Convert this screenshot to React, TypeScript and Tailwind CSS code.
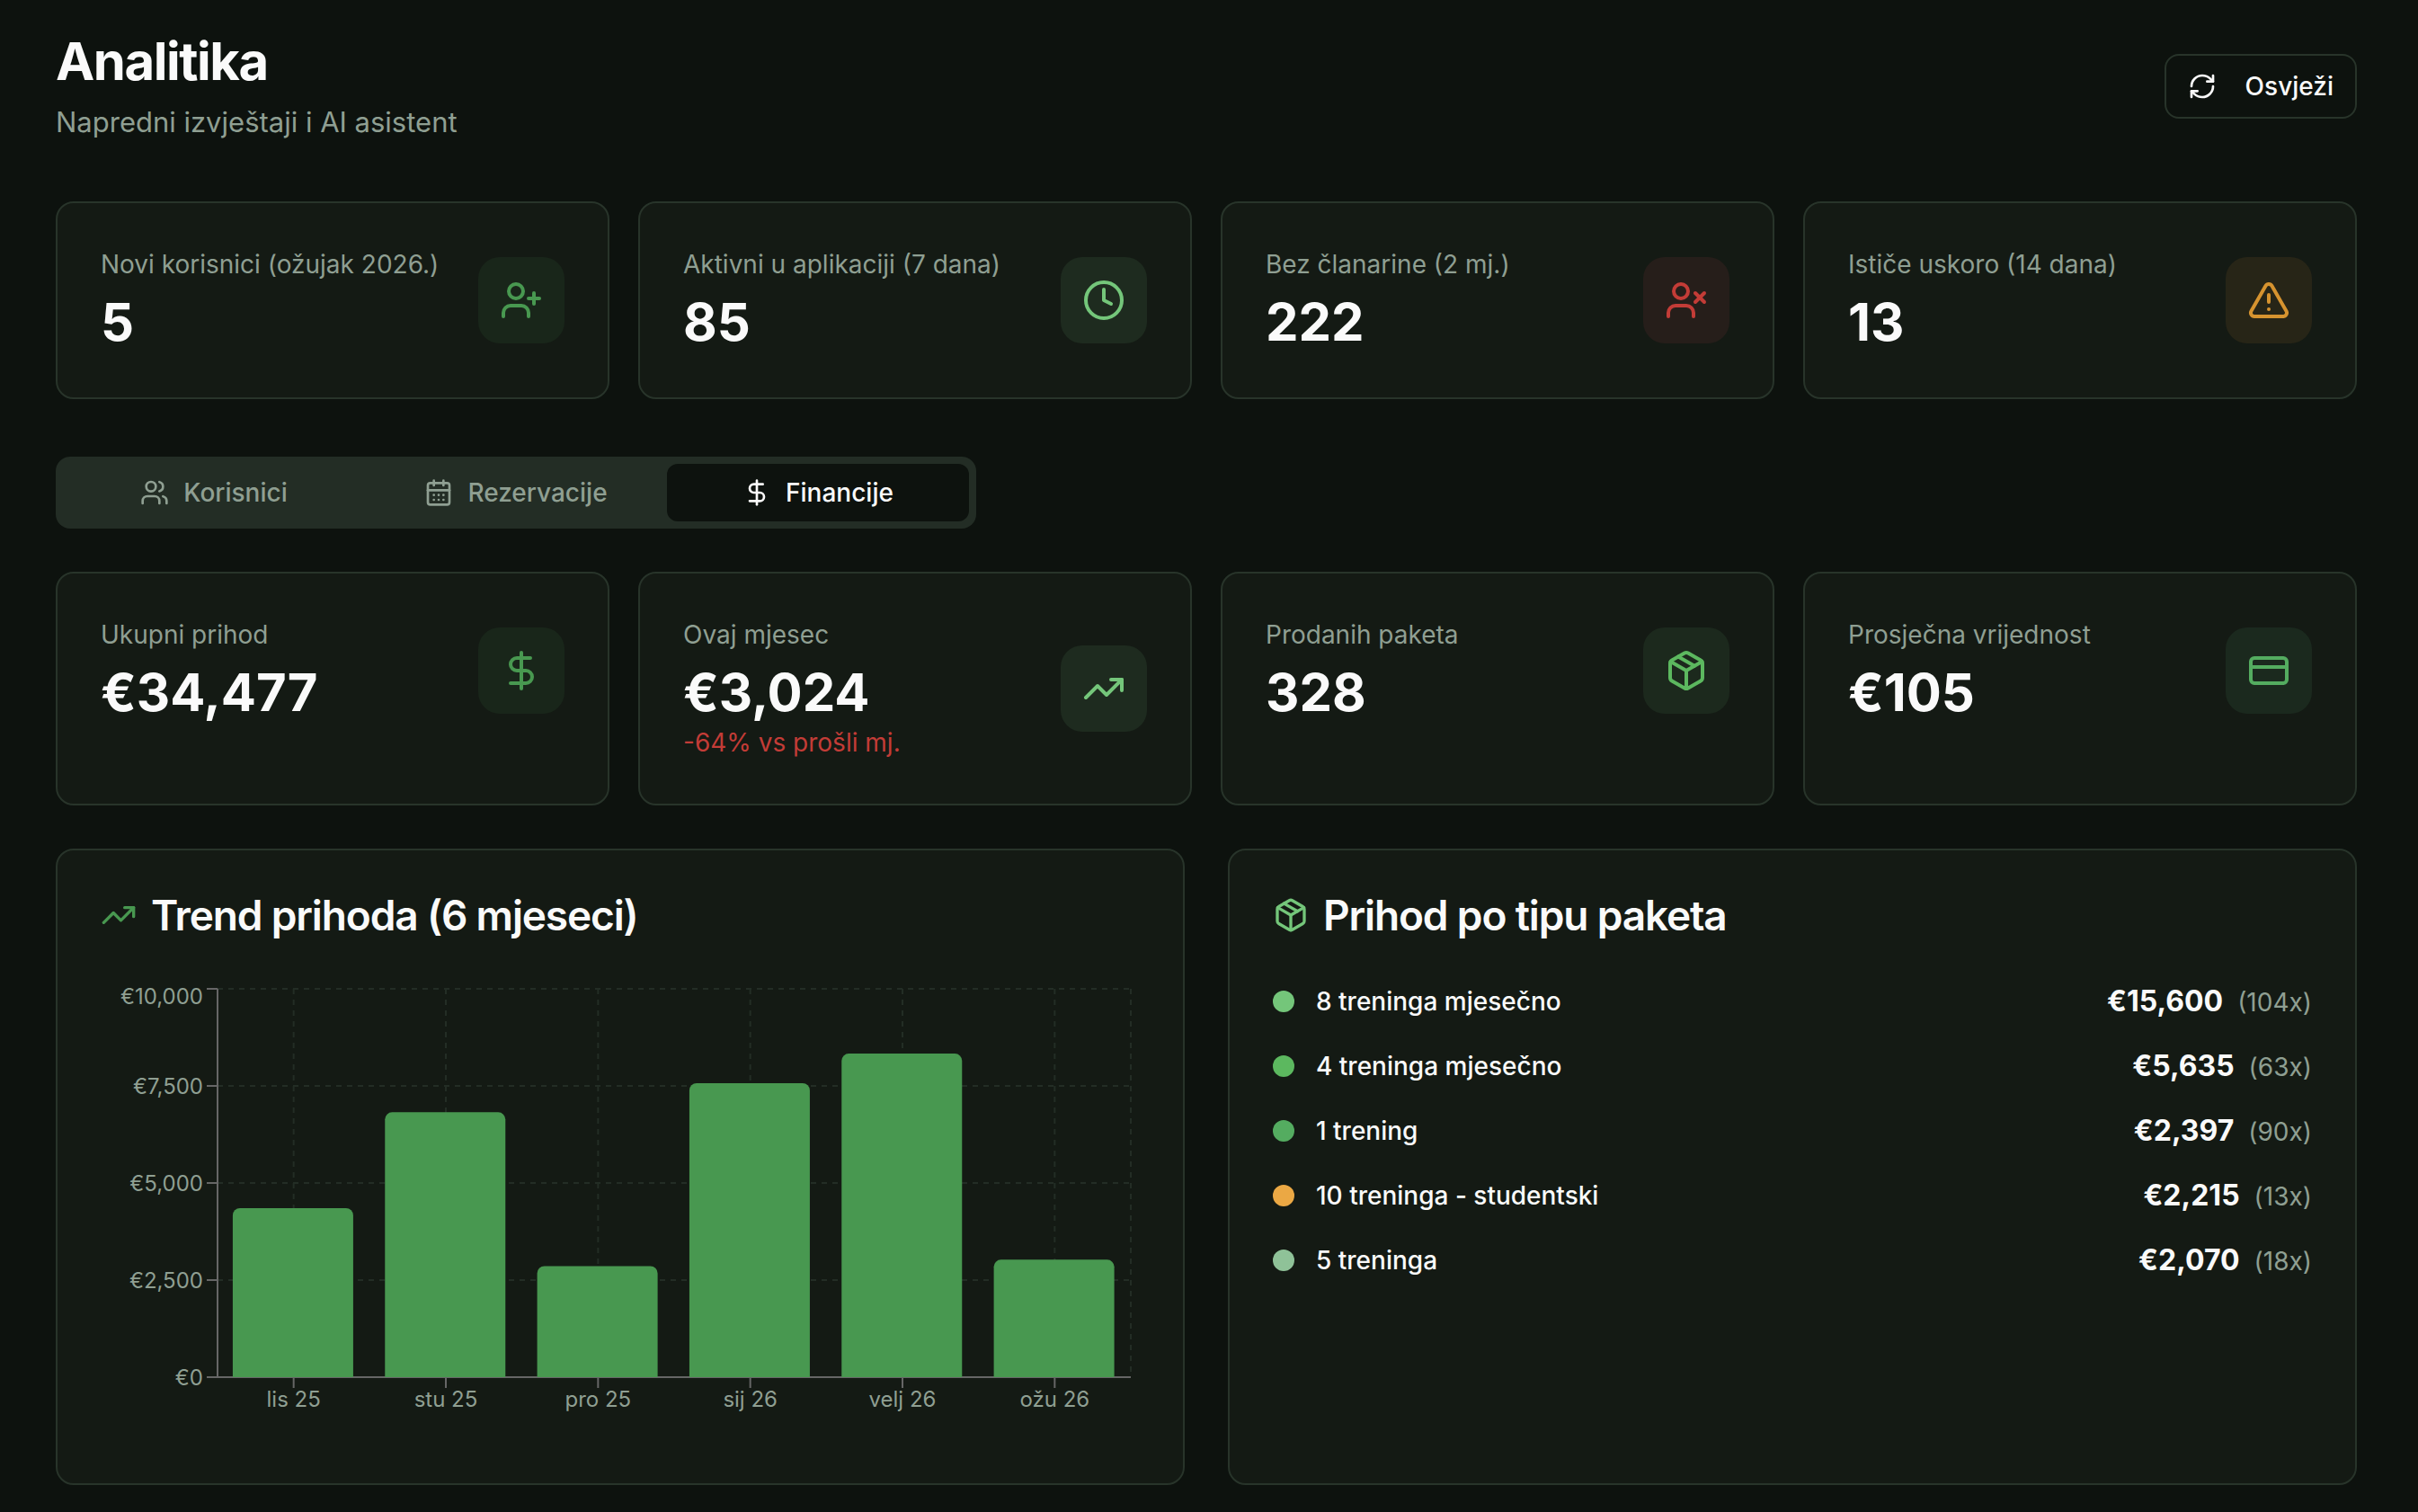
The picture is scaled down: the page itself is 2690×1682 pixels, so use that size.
import { useState } from 'react';
import {
  CalendarDays,
  Clock,
  CreditCard,
  DollarSign,
  Package,
  RefreshCw,
  TrendingUp,
  TriangleAlert,
  UserPlus,
  Users,
  UserX,
  type LucideIcon,
} from 'lucide-react';

type Stat = {
  label: string;
  value: string;
  note?: string;
  icon: LucideIcon;
  tone: string;
};

const userStats: Stat[] = [
  { label: 'Novi korisnici (ožujak 2026.)', value: '5', icon: UserPlus, tone: 'bg-[#19261a] text-[#489850]' },
  { label: 'Aktivni u aplikaciji (7 dana)', value: '85', icon: Clock, tone: 'bg-[#1e2b1f] text-[#74c67a]' },
  { label: 'Bez članarine (2 mj.)', value: '222', icon: UserX, tone: 'bg-[#261e1a] text-[#c33c37]' },
  { label: 'Ističe uskoro (14 dana)', value: '13', icon: TriangleAlert, tone: 'bg-[#272517] text-[#d6932f]' },
];

const financeStats: Stat[] = [
  { label: 'Ukupni prihod', value: '€34,477', icon: DollarSign, tone: 'bg-[#19261a] text-[#489850]' },
  { label: 'Ovaj mjesec', value: '€3,024', note: '-64% vs prošli mj.', icon: TrendingUp, tone: 'bg-[#1e2b1f] text-[#74c67a]' },
  { label: 'Prodanih paketa', value: '328', icon: Package, tone: 'bg-[#1c291d] text-[#5cb85f]' },
  { label: 'Prosječna vrijednost', value: '€105', icon: CreditCard, tone: 'bg-[#1b291e] text-[#54ac60]' },
];

const tabs = [
  { id: 'users', label: 'Korisnici', icon: Users },
  { id: 'bookings', label: 'Rezervacije', icon: CalendarDays },
  { id: 'finance', label: 'Financije', icon: DollarSign },
];

const revenue = [
  { month: 'lis 25', total: 4352 },
  { month: 'stu 25', total: 6822 },
  { month: 'pro 25', total: 2860 },
  { month: 'sij 26', total: 7570 },
  { month: 'velj 26', total: 8331 },
  { month: 'ožu 26', total: 3024 },
];

const packages = [
  { name: '8 treninga mjesečno', amount: '€15,600', count: 104, dot: 'bg-[#74c67a]' },
  { name: '4 treninga mjesečno', amount: '€5,635', count: 63, dot: 'bg-[#5cb85f]' },
  { name: '1 trening', amount: '€2,397', count: 90, dot: 'bg-[#54ac60]' },
  { name: '10 treninga - studentski', amount: '€2,215', count: 13, dot: 'bg-[#eba844]' },
  { name: '5 treninga', amount: '€2,070', count: 18, dot: 'bg-[#8fc298]' },
];

function StatCard({ stat }: { stat: Stat }) {
  const Icon = stat.icon;
  return (
    <div className="rounded-[20px] border-2 border-[#28342a] bg-[#141a14] p-12">
      <div className="flex items-center justify-between">
        <div>
          <p className="text-[28px] leading-10 text-[#8f9f92]">{stat.label}</p>
          <p className="mt-2 text-[58px] leading-[72px] font-bold">{stat.value}</p>
          {stat.note && <p className="text-[28px] leading-10 text-[#c33c37]">{stat.note}</p>}
        </div>
        <div className={`rounded-3xl p-6 ${stat.tone}`}>
          <Icon className="size-12" />
        </div>
      </div>
    </div>
  );
}

// Plot area inside the 1156x512 view box
const LEFT = 130;
const RIGHT = 1146;
const TOP = 10;
const BOTTOM = 442;
const MAX = 10000;
const ticks = [0, 2500, 5000, 7500, 10000];

function RevenueChart() {
  const band = (RIGHT - LEFT) / revenue.length;
  const barWidth = 134;
  const y = (v: number) => BOTTOM - (v / MAX) * (BOTTOM - TOP);

  return (
    <svg viewBox="0 0 1156 512" className="h-auto w-full" role="img" aria-label="Trend prihoda">
      <g stroke="#232d25" strokeWidth={2} strokeDasharray="6 6">
        {ticks.map((t) => (
          <line key={t} x1={LEFT} x2={RIGHT} y1={y(t)} y2={y(t)} />
        ))}
        {revenue.map((r, i) => (
          <line key={r.month} x1={LEFT + band * (i + 0.5)} x2={LEFT + band * (i + 0.5)} y1={TOP} y2={BOTTOM} />
        ))}
        <line x1={RIGHT} x2={RIGHT} y1={TOP} y2={BOTTOM} />
      </g>

      <g stroke="#666" strokeWidth={2}>
        <line x1={LEFT} x2={RIGHT} y1={BOTTOM} y2={BOTTOM} />
        <line x1={LEFT} x2={LEFT} y1={TOP} y2={BOTTOM} />
        {ticks.map((t) => (
          <line key={t} x1={LEFT - 12} x2={LEFT} y1={y(t)} y2={y(t)} />
        ))}
        {revenue.map((r, i) => (
          <line key={r.month} x1={LEFT + band * (i + 0.5)} x2={LEFT + band * (i + 0.5)} y1={BOTTOM} y2={BOTTOM + 12} />
        ))}
      </g>

      <g fill="#8f9f92" fontSize={24}>
        {ticks.map((t) => (
          <text key={t} x={LEFT - 16} y={t === MAX ? TOP + 17 : y(t) + 9} textAnchor="end">
            €{t.toLocaleString('en-US')}
          </text>
        ))}
        {revenue.map((r, i) => (
          <text key={r.month} x={LEFT + band * (i + 0.5)} y={BOTTOM + 33} textAnchor="middle">
            {r.month}
          </text>
        ))}
      </g>

      {revenue.map((r, i) => {
        const x = LEFT + band * (i + 0.1);
        const top = y(r.total);
        return (
          <path
            key={r.month}
            fill="#489850"
            d={`M${x},${top + 8}a8,8 0 0 1 8,-8h${barWidth - 16}a8,8 0 0 1 8,8V${BOTTOM}h${-barWidth}Z`}
          />
        );
      })}
    </svg>
  );
}

export default function App() {
  const [tab, setTab] = useState('finance');

  return (
    <main className="min-h-screen space-y-16 bg-[#0d120e] pt-8 pr-[68px] pb-[30px] pl-[62px] font-[Inter,sans-serif] text-[#fafafa]">
      <header className="flex items-center justify-between">
        <div>
          <h1 className="text-[58px] leading-[72px] font-bold tracking-tight">Analitika</h1>
          <p className="mt-2 text-[31px] leading-[48px] text-[#8f9f92]">Napredni izvještaji i AI asistent</p>
        </div>
        <button
          type="button"
          className="flex h-[72px] items-center gap-8 rounded-2xl border-2 border-[#28342a] px-6 text-[28px] leading-10 font-medium"
        >
          <RefreshCw className="size-8" />
          Osvježi
        </button>
      </header>

      <section className="grid grid-cols-4 gap-8">
        {userStats.map((s) => (
          <StatCard key={s.label} stat={s} />
        ))}
      </section>

      <div className="space-y-12">
        <div role="tablist" className="grid h-20 max-w-[1024px] grid-cols-3 rounded-2xl bg-[#232d25] p-2">
          {tabs.map(({ id, label, icon: Icon }) => (
            <button
              key={id}
              type="button"
              role="tab"
              aria-selected={tab === id}
              onClick={() => setTab(id)}
              className={`flex items-center justify-center gap-4 rounded-xl text-[28px] leading-10 font-medium ${
                tab === id ? 'bg-[#0d120e] text-[#fafafa]' : 'text-[#8f9f92]'
              }`}
            >
              <Icon className="size-8" />
              {label}
            </button>
          ))}
        </div>

        <section className="grid grid-cols-4 gap-8">
          {financeStats.map((s) => (
            <StatCard key={s.label} stat={s} />
          ))}
        </section>

        <section className="grid grid-cols-2 gap-12">
          <div className="space-y-12 rounded-[20px] border-2 border-[#28342a] bg-[#141a14] p-12">
            <h2 className="flex items-center gap-4 text-[46px] leading-[48px] font-semibold tracking-tight">
              <TrendingUp className="size-10 text-[#489850]" />
              Trend prihoda (6 mjeseci)
            </h2>
            <RevenueChart />
          </div>

          <div className="space-y-12 rounded-[20px] border-2 border-[#28342a] bg-[#141a14] p-12">
            <h2 className="flex items-center gap-4 text-[46px] leading-[48px] font-semibold tracking-tight">
              <Package className="size-10 text-[#74c67a]" />
              Prihod po tipu paketa
            </h2>
            <ul className="space-y-6">
              {packages.map((p) => (
                <li key={p.name} className="flex items-center justify-between">
                  <div className="flex items-center gap-6">
                    <span className={`size-6 rounded-full ${p.dot}`} />
                    <span className="text-[28px] leading-10 font-medium">{p.name}</span>
                  </div>
                  <div className="text-[32px] leading-[48px]">
                    <span className="font-bold">{p.amount}</span>
                    <span className="ml-4 text-[28px] leading-10 text-[#8f9f92]">({p.count}x)</span>
                  </div>
                </li>
              ))}
            </ul>
          </div>
        </section>
      </div>
    </main>
  );
}
